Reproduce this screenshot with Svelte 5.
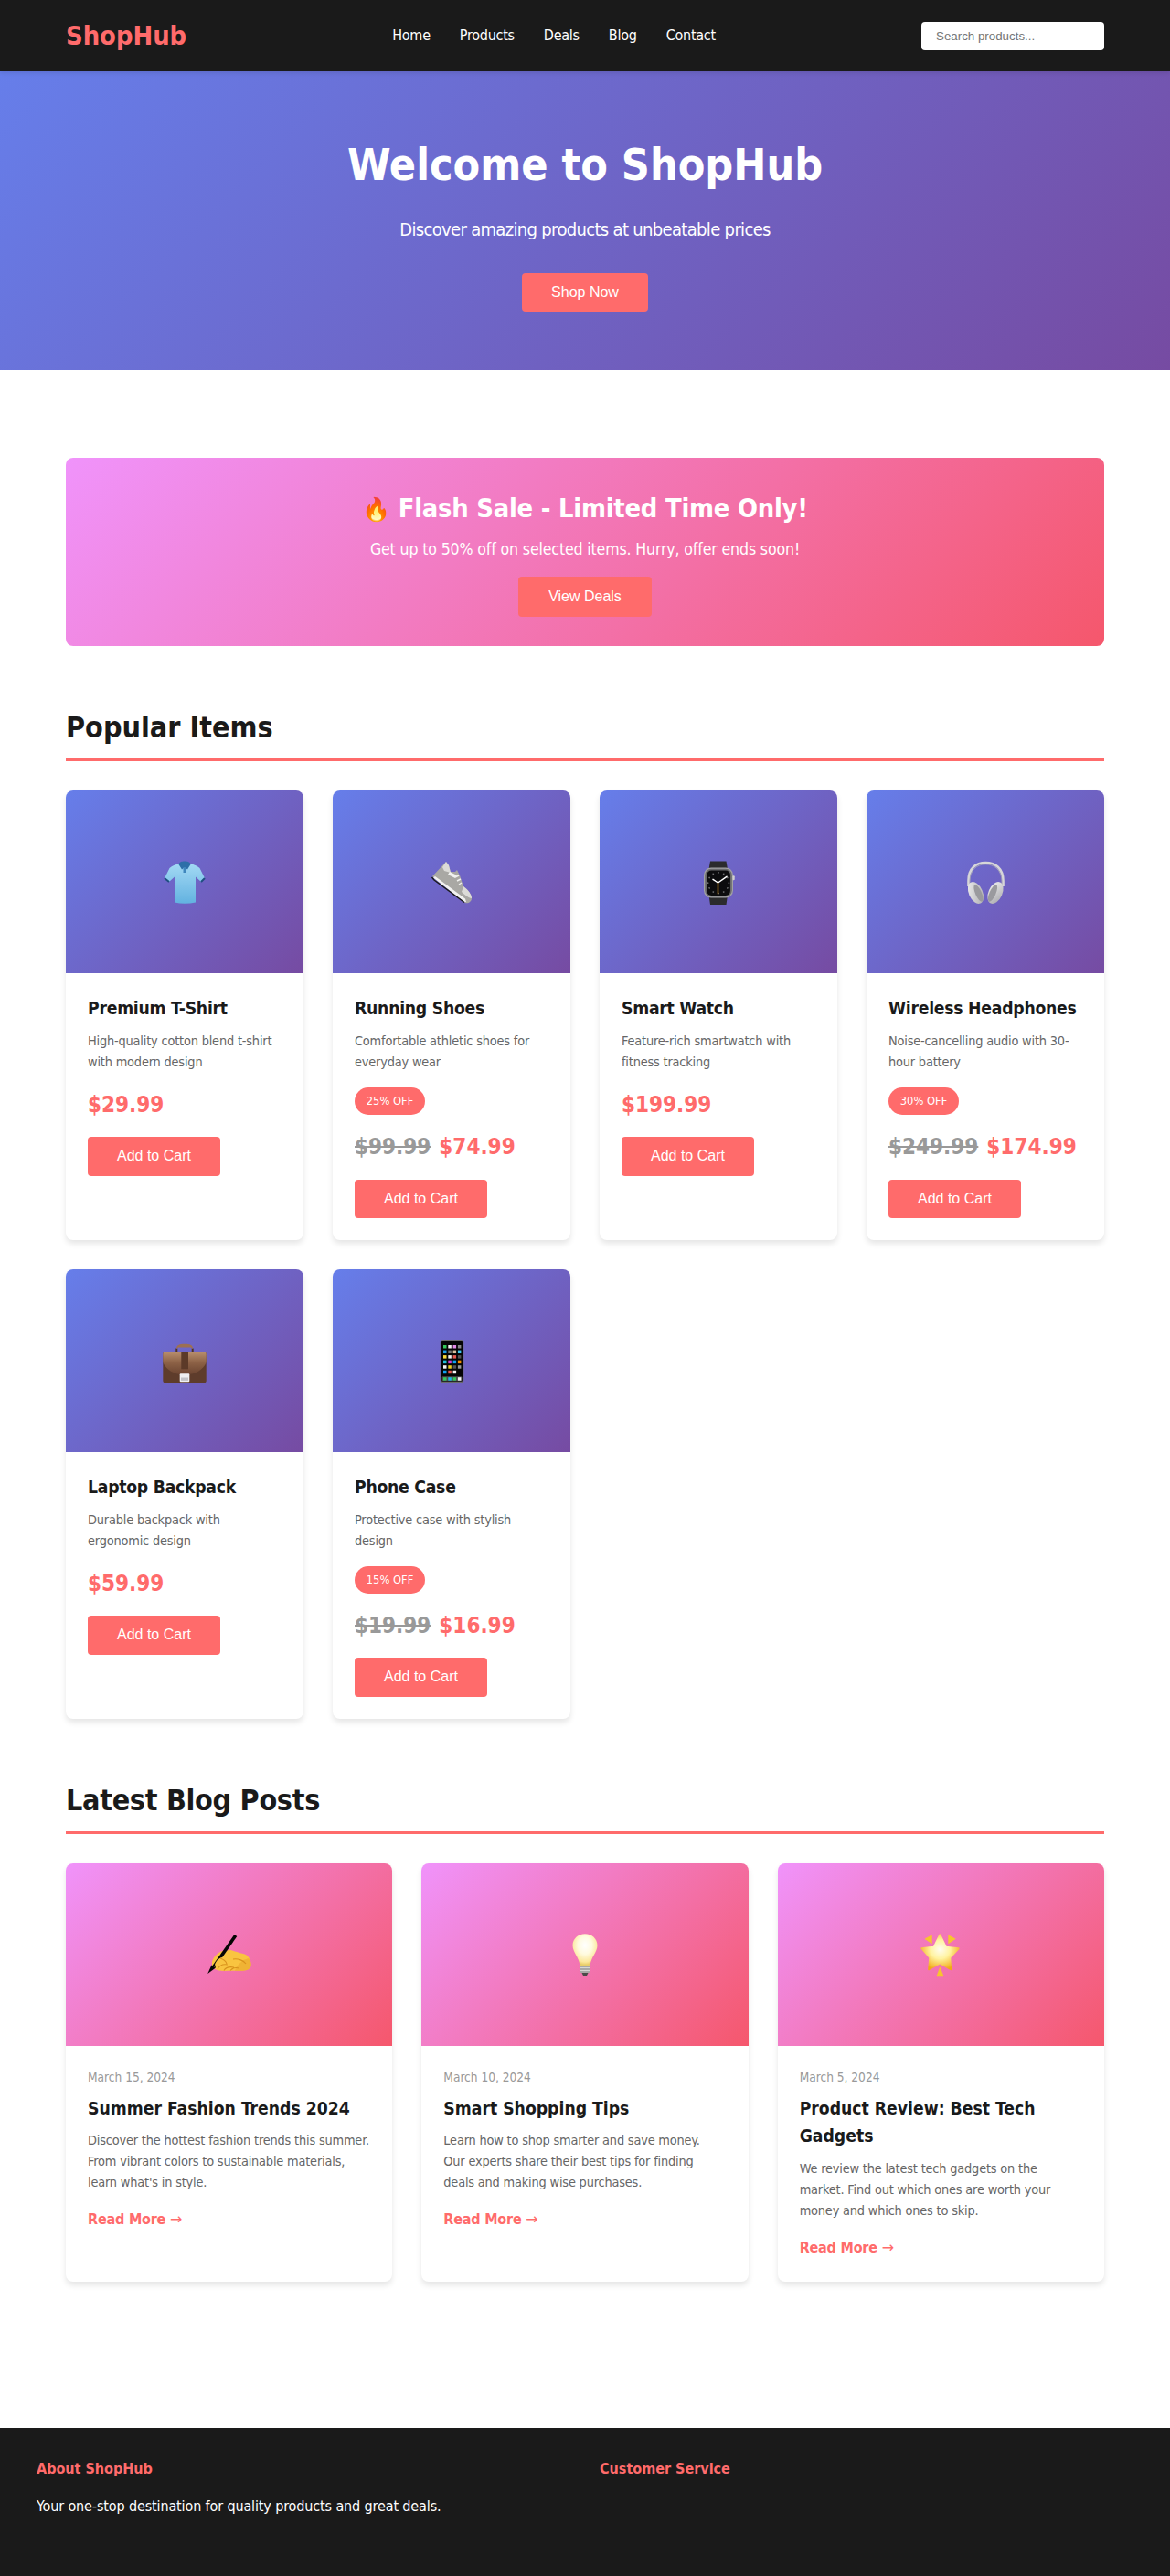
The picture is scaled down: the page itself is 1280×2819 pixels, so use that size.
<script>
  const links = ['Home', 'Products', 'Deals', 'Blog', 'Contact'];
  const products = [
    { icon: 'shirt', name: 'Premium T-Shirt', desc: 'High-quality cotton blend t-shirt with modern design', price: '$29.99' },
    { icon: 'shoe', name: 'Running Shoes', desc: 'Comfortable athletic shoes for everyday wear', badge: '25% OFF', old: '$99.99', price: '$74.99' },
    { icon: 'watch', name: 'Smart Watch', desc: 'Feature-rich smartwatch with fitness tracking', price: '$199.99' },
    { icon: 'phones', name: 'Wireless Headphones', desc: 'Noise-cancelling audio with 30-hour battery', badge: '30% OFF', old: '$249.99', price: '$174.99' },
    { icon: 'case', name: 'Laptop Backpack', desc: 'Durable backpack with ergonomic design', price: '$59.99' },
    { icon: 'phone', name: 'Phone Case', desc: 'Protective case with stylish design', badge: '15% OFF', old: '$19.99', price: '$16.99' }
  ];
  const posts = [
    { icon: 'write', date: 'March 15, 2024', title: 'Summer Fashion Trends 2024', text: "Discover the hottest fashion trends this summer. From vibrant colors to sustainable materials, learn what's in style." },
    { icon: 'bulb', date: 'March 10, 2024', title: 'Smart Shopping Tips', text: 'Learn how to shop smarter and save money.\nOur experts share their best tips for finding\ndeals and making wise purchases.' },
    { icon: 'star', date: 'March 5, 2024', title: 'Product Review: Best Tech Gadgets', text: 'We review the latest tech gadgets on the market. Find out which ones are worth your money and which ones to skip.' }
  ];
  const apps = [
    ['#34c759', '#f4f4f4', '#e58be8', '#888888'],
    ['#1a9ee8', '#777777', '#d8c0a0', '#40c8f0'],
    ['#f8d838', '#f4f4f4', '#e85850', '#555555'],
    ['#20c0d8', '#d040d8', '#10a0f0', '#f89000'],
    ['#f4f4f4', '#f0d020', '#555555', '#999999'],
    ['#10a0f0', '#e85850', '#f4f4f4', 'none']
  ];
  const dock = ['#34c759', '#20b8e8', '#34c759', '#f4f4f4'];
  const ticks = [0, 30, 60, 90, 120, 150, 180, 210, 240, 270, 300, 330];
</script>

{#snippet icon(name)}
  <svg class="glyph" viewBox="0 0 64 64" role="img" aria-label={name}>
    {#if name === 'shirt'}
      <defs>
        <linearGradient id="shirtFill" x1="0" y1="0" x2="0" y2="1">
          <stop offset="0" stop-color="#a3d9f4" /><stop offset="1" stop-color="#62b2e0" />
        </linearGradient>
      </defs>
      <path fill="url(#shirtFill)" d="M25 12C21 13.5 18 15 15.5 17L10 28 15 32 21 26.5V54.5Q32 57 44 54.5V26.5L50 32 54 28 48.5 17C46 15 43 13.5 39 12L32 17Z" />
      <path fill="none" stroke="#1f4e80" stroke-width="2" d="M10 28L15 32M50 32L54 28" />
      <path fill="#2d6fa8" d="M25.5 13C26 10 29 9.5 32 9.5S38 10 38.5 13L35 18.5 32 16 29 18.5Z" />
      <rect x="30.5" y="16" width="3" height="6" fill="#3f86bd" />
    {:else if name === 'shoe'}
      <path fill="#a9a8a4" d="M11 26C16 21 21 15 26 10L29 14 31 21 36 21 38 19 41 25 45 37C49 40 54 45 54 50 54 54 50 56 47 55Z" />
      <path fill="#dcdbd8" d="M26 10L29 14 31 22 24 20 22 16ZM45 37C49 40 54 45 54 50 52 50 47 47 43 43Z" />
      <path fill="#f2f2f0" d="M30 21L38 25 36 28 28 24ZM12 27.5L14 26 47 50.5 48 54 46 54Z" />
      <path fill="none" stroke="#f0f0ee" stroke-width="1.4" d="M36 27L40 25M38 31L42 29M40 35L43 33" />
      <path fill="none" stroke="#1c1c1c" stroke-width="1.5" d="M10.5 27L13 30 46 54.5" />
    {:else if name === 'watch'}
      <path fill="#2b2b2d" d="M23 9.5H40.5L41.8 17H21.7ZM21.7 48H41.8L40.5 57H23Z" />
      <rect x="16" y="16.5" width="32" height="33" rx="8" fill="#a2a2a4" />
      <rect x="17.2" y="17.7" width="29.6" height="30.6" rx="7" fill="#6a6a6c" />
      <rect x="19.3" y="19.5" width="25.6" height="27.5" rx="5" fill="#0c0c0e" />
      <rect x="47.5" y="25.3" width="2.2" height="5" rx="1" fill="#d0d0d0" />
      {#each ticks as t}
        <circle cx="32" cy="21.8" r="0.9" fill="#6e6e70" transform="rotate({t} 32 33.2)" />
      {/each}
      <path stroke="#ffffff" stroke-width="1.5" stroke-linecap="round" d="M31.5 33L26 29.3M31.5 33L41 26.3" />
      <path stroke="#c98a20" stroke-width="1.5" d="M31.5 33V45.3" />
    {:else if name === 'phones'}
      <defs>
        <linearGradient id="cupFill" x1="0" y1="0" x2="1" y2="1">
          <stop offset="0" stop-color="#f0f0f0" /><stop offset="1" stop-color="#a8a8ac" />
        </linearGradient>
      </defs>
      <path fill="none" stroke="#d6d6d8" stroke-width="2.6" d="M13.5 37V31C13.5 17 22 11 32.3 11S51.5 17 51.5 31V37" />
      <path fill="none" stroke="#b0b0b4" stroke-width="0.8" d="M15 36V31C15 19 23 12.8 32.3 12.8S50 19 50 31V36" />
      <ellipse cx="21.5" cy="44" rx="7.6" ry="12.6" fill="url(#cupFill)" transform="rotate(-24 21.5 44)" />
      <ellipse cx="43" cy="44" rx="7.6" ry="12.6" fill="url(#cupFill)" transform="rotate(24 43 44)" />
      <ellipse cx="24.5" cy="44.5" rx="3.4" ry="10" fill="#9a9a9e" transform="rotate(-24 24.5 44.5)" />
      <ellipse cx="40" cy="44.5" rx="3.4" ry="10" fill="#9a9a9e" transform="rotate(24 40 44.5)" />
    {:else if name === 'case'}
      <defs>
        <linearGradient id="caseFill" x1="0" y1="0" x2="0" y2="1">
          <stop offset="0" stop-color="#b98f6e" /><stop offset="0.45" stop-color="#8e6347" /><stop offset="1" stop-color="#6a4330" />
        </linearGradient>
      </defs>
      <path fill="none" stroke="#4d3226" stroke-width="2" d="M23.3 23V18.5M40.7 23V18.5" />
      <path fill="#9c6f54" d="M23 19C23 15 26 13.7 32 13.7S41 15 41 19L38.5 17.5H25.5Z" />
      <rect x="8.3" y="22.3" width="47.4" height="34" rx="2.5" fill="#5e3c2b" />
      <path fill="url(#caseFill)" d="M8.3 25C8.3 23 9.5 22.3 11 22.3H53C54.5 22.3 55.7 23 55.7 25V34C52 42 44 47.5 32 47.5S12 42 8.3 34Z" />
      <rect x="28.3" y="22.3" width="7.7" height="19" fill="#5c3a28" />
      <rect x="26.7" y="46.3" width="10.6" height="9" rx="1" fill="#f0f0f2" />
      <rect x="28" y="50.5" width="8" height="3.4" fill="#c4c4c8" />
    {:else if name === 'phone'}
      <rect x="19.7" y="9" width="25.6" height="47.3" rx="3" fill="#6a6a6c" />
      <rect x="20.9" y="10.2" width="23.2" height="44.9" rx="2" fill="#050505" />
      {#each apps as row, r}
        {#each row as c, i}
          <rect x={23 + i * 5.3} y={15 + r * 5.55} width="3.5" height="3.5" fill={c} />
        {/each}
      {/each}
      <rect x="21.6" y="49.2" width="21.8" height="5.2" rx="1" fill="#4a4a4c" />
      {#each dock as c, i}
        <rect x={23 + i * 5.3} y="50.2" width="3.5" height="3.5" fill={c} />
      {/each}
    {:else if name === 'write'}
      <path fill="#f9c440" d="M13 40C14 35 19 30 24 28L33 27C38 28 42 30 47 31 52 32 56 37 55.6 44 55 48 51 49.7 47 49.7H24C19 49.7 15 48 13 45Z" />
      <path fill="#e9a52a" d="M40 45C44 40 48 37 53 36 55 38 55.8 41 55.6 44 55 48 51 49.7 47 49.7H38Z" opacity="0.55" />
      <path fill="none" stroke="#050505" stroke-width="3.6" d="M38.8 11L15 45" />
      <path fill="#050505" d="M12.5 43.5L17 46.5 8.2 53Z" />
      <path fill="#f9c440" d="M16 43C18 37 23 34 28 35 32 36 34 39 34 43 34 47 31 49.7 27 49.7 22 49.7 18 48 16 43Z" />
      <path fill="none" stroke="#d9921c" stroke-width="1.1" d="M19 48C21 44 25 42 30 43M26 49.5C28 46 32 45 37 46M33 49.5C35 47 39 46 43 47M36 37C41 36 47 38 50 42M22 36C25 37 28 39 29 42" />
    {:else if name === 'bulb'}
      <defs>
        <radialGradient id="bulbFill" cx="0.5" cy="0.36" r="0.62">
          <stop offset="0" stop-color="#ffffff" /><stop offset="0.45" stop-color="#fffbe0" /><stop offset="0.85" stop-color="#fbe79a" /><stop offset="1" stop-color="#e9cd68" />
        </radialGradient>
      </defs>
      <path fill="url(#bulbFill)" d="M32 9.3C39.5 9.3 45.5 14.5 45.5 22 45.5 29 39 34 37.5 44H26.5C25 34 18.5 29 18.5 22 18.5 14.5 24.5 9.3 32 9.3Z" />
      <rect x="26.5" y="44" width="11" height="8" rx="1.5" fill="#a8a8a6" />
      <path stroke="#d6d6d4" stroke-width="1.2" d="M26.5 46.5H37.5M26.5 49.5H37.5" />
      <path fill="#4a4a48" d="M28.5 52H35.5L34 55H30Z" />
    {:else if name === 'star'}
      <defs>
        <radialGradient id="starFill" cx="0.5" cy="0.42" r="0.6">
          <stop offset="0" stop-color="#fffdf0" /><stop offset="0.45" stop-color="#fff3a0" /><stop offset="1" stop-color="#f2a914" />
        </radialGradient>
      </defs>
      <path fill="url(#starFill)" stroke="url(#starFill)" stroke-width="2" stroke-linejoin="round" d="M31.3 10.3L37.8 23.7 51.7 25.2 42.3 35.3 43.2 48.2 31.3 41.3 19.2 48.2 20.3 35.3 11.4 25.2 24.8 23.7Z" />
      <path fill="#f7c52e" d="M14.4 14.7L22.7 10.3V20.3ZM40.3 10.3L48.7 14.7 40.3 20.3ZM31.3 45.3L35.3 55.3H27.7Z" />
    {/if}
  </svg>
{/snippet}

<nav class="nav">
  <div class="logo">ShopHub</div>
  <ul class="links">
    {#each links as l}<li><a href="#top">{l}</a></li>{/each}
  </ul>
  <input class="search" type="text" placeholder="Search products..." />
</nav>

<header class="hero">
  <h1>Welcome to ShopHub</h1>
  <p>Discover amazing products at unbeatable prices</p>
  <button class="btn center">Shop Now</button>
</header>

<main class="main">
  <section class="flash">
    <h2><span class="fire">🔥</span> Flash Sale - Limited Time Only!</h2>
    <p>Get up to 50% off on selected items. Hurry, offer ends soon!</p>
    <button class="btn center">View Deals</button>
  </section>

  <section class="section">
    <h2 class="title">Popular Items</h2>
    <div class="products">
      {#each products as p}
        <article class="card">
          <div class="thumb blue">{@render icon(p.icon)}</div>
          <div class="body">
            <h3 class="pname">{p.name}</h3>
            <p class="desc">{p.desc}</p>
            {#if p.badge}<span class="badge">{p.badge}</span>{/if}
            <div class="price">{#if p.old}<span class="old">{p.old}</span>{/if}{p.price}</div>
            <button class="btn">Add to Cart</button>
          </div>
        </article>
      {/each}
    </div>
  </section>

  <section class="section">
    <h2 class="title tight">Latest Blog Posts</h2>
    <div class="posts">
      {#each posts as p}
        <article class="card">
          <div class="thumb pink">{@render icon(p.icon)}</div>
          <div class="body">
            <div class="date">{p.date}</div>
            <h3>{p.title}</h3>
            <p class="desc">{p.text}</p>
            <a class="more" href="#top">Read More <span class="arrow">→</span></a>
          </div>
        </article>
      {/each}
    </div>
  </section>
</main>

<footer class="footer">
  <div class="col">
    <h4>About ShopHub</h4>
    <p>Your one-stop destination for quality products and great deals.</p>
  </div>
  <div class="col">
    <h4>Customer Service</h4>
  </div>
</footer>

<style>
  :global(body) {
    margin: 0;
    font-family: "DejaVu Sans Condensed", "DejaVu Sans", sans-serif;
    font-stretch: condensed;
    line-height: 1.6;
    color: #1a1a1a;
    background: #fff;
  }
  * { box-sizing: border-box; }
  h1, h2, h3, h4, p, ul { margin: 0; padding: 0; }

  .nav {
    position: relative;
    display: flex;
    align-items: center;
    justify-content: space-between;
    background: #1a1a1a;
    padding: 16px 72px;
    box-shadow: 0 2px 4px rgba(0, 0, 0, 0.1);
  }
  .logo { font-size: 28.8px; font-weight: 700; color: #ff6b6b; }
  .links { display: flex; gap: 32px; list-style: none; }
  .links a { color: #fff; text-decoration: none; letter-spacing: -0.25px; }
  .search {
    width: 200px;
    padding: 8px 16px;
    border: none;
    border-radius: 4px;
    background: #fff;
    font-family: "Liberation Sans", Arial, sans-serif;
    font-size: 13.33px;
  }

  .hero {
    padding: 64px 32px;
    text-align: center;
    color: #fff;
    background: linear-gradient(135deg, #667eea 0%, #764ba2 100%);
  }
  .hero h1 { font-size: 48px; margin-bottom: 16px; }
  .hero p { font-size: 20px; margin-bottom: 32px; letter-spacing: -0.67px; }

  .btn {
    display: block;
    padding: 12px 32px;
    border: none;
    border-radius: 4px;
    background: #ff6b6b;
    color: #fff;
    font-family: "Liberation Sans", Arial, sans-serif;
    font-size: 16px;
    line-height: 18.4px;
  }
  .center { margin: 0 auto; }

  .main { max-width: 1200px; margin: 0 auto; padding: 96px 32px; }

  .flash {
    padding: 32px;
    margin-bottom: 64px;
    border-radius: 8px;
    text-align: center;
    color: #fff;
    background: linear-gradient(135deg, #f093fb 0%, #f5576c 100%);
  }
  .flash h2 { font-size: 28.8px; margin-bottom: 8px; letter-spacing: -0.23px; }
  .flash p { font-size: 17.6px; margin-bottom: 16px; letter-spacing: -0.15px; }
  .flash .btn { padding: 12.6px 33px; }
  .fire { font-size: 25px; }

  .section { margin-bottom: 64px; }
  .title {
    font-size: 32px;
    padding-bottom: 8px;
    border-bottom: 3px solid #ff6b6b;
    margin-bottom: 32px;
  }
  .tight { letter-spacing: -0.3px; }

  .products { display: grid; grid-template-columns: repeat(4, 1fr); gap: 32px; }
  .posts { display: grid; grid-template-columns: repeat(3, 1fr); gap: 32px; }

  .card {
    border-radius: 8px;
    overflow: hidden;
    background: #fff;
    box-shadow: 0 4px 6px rgba(0, 0, 0, 0.1);
  }
  .thumb {
    height: 200px;
    display: flex;
    align-items: center;
    justify-content: center;
  }
  .glyph { display: block; width: 64px; height: 64px; }
  .blue { background: linear-gradient(135deg, #667eea 0%, #764ba2 100%); }
  .pink { background: linear-gradient(135deg, #f093fb 0%, #f5576c 100%); }
  .body { padding: 24px; }
  .body h3 { font-size: 19.2px; margin-bottom: 8px; }
  .body .pname { letter-spacing: -0.25px; }
  .desc { font-size: 14.4px; color: #666; margin-bottom: 16px; letter-spacing: -0.18px; white-space: pre-line; }
  .badge {
    display: block;
    width: fit-content;
    padding: 4.8px 12.8px;
    margin-bottom: 16px;
    border-radius: 20px;
    background: #ff6b6b;
    color: #fff;
    font-size: 12.8px;
  }
  .price { font-size: 24px; font-weight: 700; color: #ff6b6b; margin-bottom: 16px; }
  .old { color: #999; text-decoration: line-through; margin-right: 9px; }

  .date { font-size: 13.6px; color: #999; margin-bottom: 8px; }
  .more { color: #ff6b6b; font-weight: 700; text-decoration: none; letter-spacing: -0.2px; }
  .arrow { font-family: "DejaVu Sans", sans-serif; font-stretch: normal; font-weight: 400; line-height: 1; }

  .footer {
    display: grid;
    grid-template-columns: repeat(2, 1fr);
    gap: 32px;
    padding: 32px 40px 64px;
    background: #1a1a1a;
    color: #fff;
  }
  .footer h4 { font-size: 16px; color: #ff6b6b; margin-bottom: 16px; }
  .footer p { letter-spacing: -0.13px; }
</style>
